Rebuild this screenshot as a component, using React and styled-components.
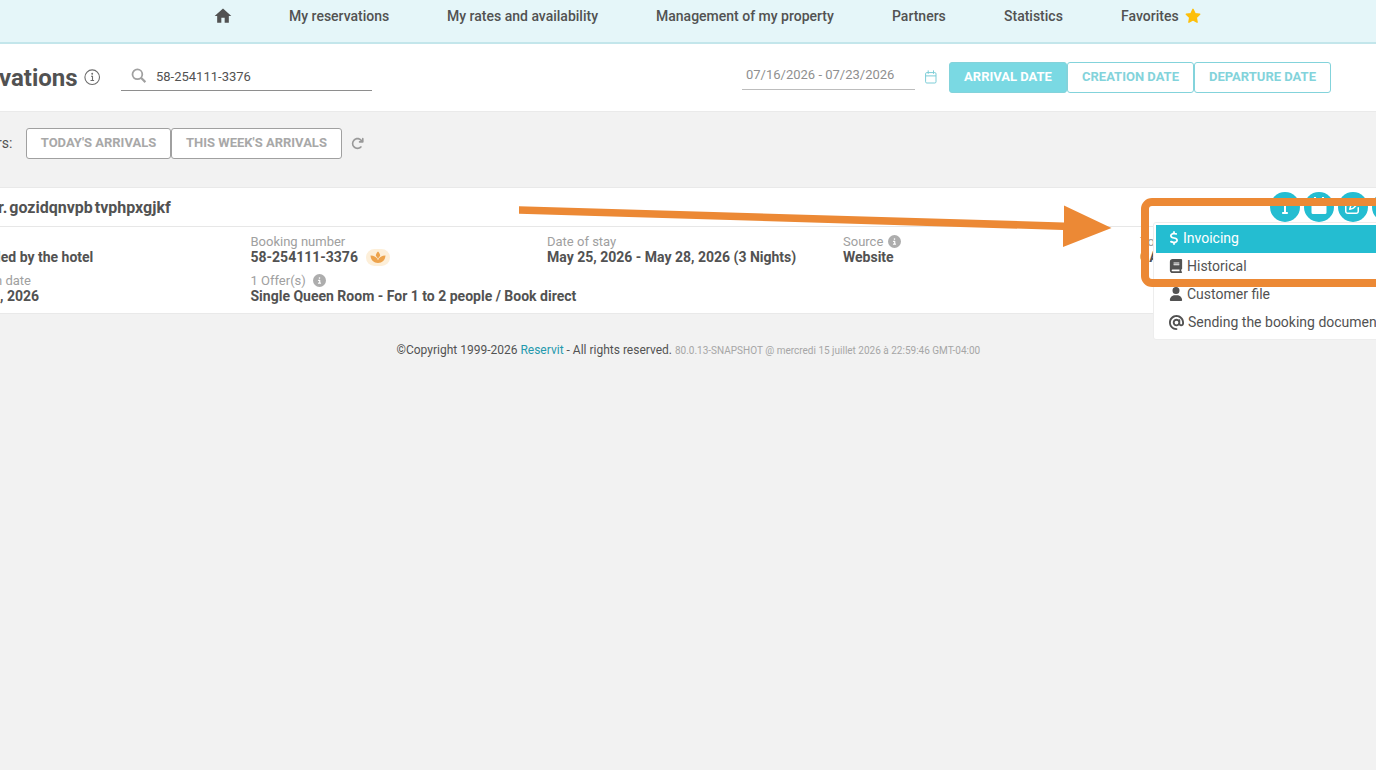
import React from 'react';
import styled, { createGlobalStyle } from 'styled-components';
import { FaArrowRotateRight, FaDollarSign, FaBook, FaUser, FaAt, FaInfo, FaCircleInfo, FaRegPenToSquare } from 'react-icons/fa6';
import { MdHome } from 'react-icons/md';

const ink = '#525252';
const teal = '#24bdd1';
const orange = '#ec8935';

const GlobalStyle = createGlobalStyle`
  * { box-sizing: border-box; }
  html, body { margin: 0; padding: 0; height: 100%; overflow: hidden; }
  body { background: #f2f2f2; color: ${ink}; font-family: Roboto, "Liberation Sans", sans-serif; }
`;

const Page = styled.div`
  position: relative;
  width: 1376px;
  height: 770px;
  overflow: hidden;
  background: #f2f2f2;
`;

const Nav = styled.nav`
  height: 44px;
  padding: 0 0 10px 213px;
  display: flex;
  align-items: center;
  background: #e5f6f9;
  border-bottom: 2px solid #c3e6eb;
`;

const NavItem = styled.a`
  flex: none;
  display: flex;
  align-items: center;
  gap: 6px;
  width: ${(p) => p.$w}px;
  white-space: nowrap;
  font-size: 14px;
  font-weight: 500;
  svg { flex: none; display: block; }
`;

const Header = styled.header`
  height: 67px;
  display: flex;
  align-items: center;
  background: #fff;
`;

const Title = styled.h1`
  margin: 0 8px 0 -1px;
  width: 77px;
  font-size: 24px;
  line-height: 28px;
  font-weight: 700;
  white-space: nowrap;
`;

const SearchField = styled.label`
  margin: 0 370px 1px 20px;
  width: 251px;
  height: 27px;
  padding: 0 0 1px 10px;
  display: flex;
  align-items: center;
  gap: 9px;
  border-bottom: 1px solid #8e8e8e;
  font-size: 13px;
  white-space: nowrap;
  svg { margin-bottom: 1px; }
`;

const DateField = styled.div`
  width: 173px;
  height: 28px;
  padding: 0 0 2px 4px;
  margin: 0 10px 4px 0;
  display: flex;
  align-items: center;
  border-bottom: 1px solid #bdbdbd;
  color: #8f8f8f;
  font-size: 13px;
  white-space: nowrap;
`;

const ButtonGroup = styled.div`
  display: flex;
  margin-left: ${(p) => p.$ml}px;
`;

const Button = styled.button`
  width: ${(p) => p.$w}px;
  height: 31px;
  padding: 0 0 2px;
  border-radius: 3px;
  border: 1px solid ${(p) => (p.$tone === 'grey' ? '#a0a0a0' : '#83d3db')};
  background: ${(p) => (p.$tone === 'active' ? '#7ad9e3' : '#fff')};
  color: ${(p) => ({ grey: '#a8a8a8', active: '#fff', teal: '#83d3db' }[p.$tone])};
  font: 700 13px Roboto, sans-serif;
  white-space: nowrap;
`;

const Filters = styled.div`
  height: 76px;
  padding-top: 16px;
  display: flex;
  align-items: flex-start;
  border-top: 1px solid #eaeaea;
  color: #999;
  svg { margin: 9px 0 0 9px; }
`;

const FilterLabel = styled.span`
  width: 15px;
  margin: 7px 0 0 -3px;
  font-size: 14px;
  line-height: 16px;
  color: ${ink};
`;

const Card = styled.section`
  height: 127px;
  background: #fff;
  border-top: 1px solid #e9e9e9;
  border-bottom: 1px solid #e9e9e9;
`;

const CardHeader = styled.div`
  height: 39px;
  display: flex;
  align-items: center;
  border-bottom: 1px solid #e7e7e7;
`;

const Guest = styled.h2`
  flex: none;
  width: 1272px;
  margin: 0 0 0 -2px;
  font-size: 16px;
  font-weight: 700;
  white-space: nowrap;
  word-spacing: -2px;
`;

const Actions = styled.div`
  display: flex;
  gap: 4px;
`;

const RoundAction = styled.span`
  flex: none;
  width: 30px;
  height: 30px;
  padding-bottom: 2px;
  border-radius: 50%;
  display: grid;
  place-items: center;
  background: ${teal};
  color: #fff;
`;

const Details = styled.div`
  padding-top: 7px;
  display: grid;
  grid-template-columns: 250.5px 296.5px 296px 297px 236px;
  grid-auto-rows: 39px;
`;

const Field = styled.div`
  grid-column: ${(p) => p.$col};
  white-space: nowrap;
`;

const FieldLabel = styled.div`
  height: 15px;
  margin-left: ${(p) => p.$shift || 0}px;
  display: flex;
  align-items: center;
  gap: ${(p) => p.$gap || 5}px;
  font-size: 13px;
  line-height: 15px;
  color: #a0a0a0;
  svg { color: #adadad; }
`;

const FieldValue = styled.div`
  height: 16px;
  margin-left: ${(p) => p.$shift || 0}px;
  display: flex;
  align-items: center;
  gap: 8px;
  font-size: 14px;
  line-height: 16px;
  font-weight: 700;
`;

const Badge = styled.span`
  width: 24px;
  height: 17px;
  border-radius: 9px;
  background: #fdefd9;
  display: grid;
  place-items: center;
`;

const Footer = styled.footer`
  padding: 28px 0 0 396.5px;
  font-size: 12px;
  line-height: 16px;
  white-space: nowrap;
`;

const Brand = styled.a`
  color: #2499ad;
`;

const Build = styled.small`
  font-size: 10px;
  color: #a6a6a6;
`;

const Menu = styled.div`
  position: absolute;
  left: 1153px;
  top: 222px;
  width: 240px;
  height: 118px;
  padding: 2px;
  background: #fff;
  border: 1px solid #ededed;
  border-radius: 3px;
`;

const MenuItem = styled.div`
  height: 28px;
  padding: 0 0 2px 13px;
  display: flex;
  align-items: center;
  gap: ${(p) => p.$gap || 4}px;
  font-size: 14px;
  white-space: nowrap;
  background: ${(p) => (p.$active ? teal : 'transparent')};
  color: ${(p) => (p.$active ? '#fff' : ink)};
`;

const DollarIcon = styled(FaDollarSign)`
  width: 10px;
  height: 14px;
`;

const Highlight = styled.div`
  position: absolute;
  left: 1141px;
  top: 198px;
  width: 260px;
  height: 89px;
  border: 8px solid ${orange};
  border-radius: 11px;
`;

const Arrow = styled.svg`
  position: absolute;
  left: 519px;
  top: 200px;
`;

const StarIcon = () => (
  <svg width="16" height="16" viewBox="0 0 16 16">
    <path d="M8 1.3l2 4.3 4.7.6-3.4 3.3.8 4.7L8 12l-4.1 2.2.8-4.7L1.3 6.2 6 5.6z" fill="#fdbf0a" stroke="#fdbf0a" strokeWidth="1.4" strokeLinejoin="round" />
  </svg>
);

const InfoOutline = () => (
  <svg width="17" height="17" viewBox="0 0 17 17" fill="none" stroke="#6c6c6c" strokeWidth="1.1">
    <circle cx="8.2" cy="8.2" r="7.3" />
    <path d="M7 7.3h1.5v4M6.5 11.5h3.6" />
    <circle cx="8.2" cy="4.8" r=".4" fill="#6c6c6c" />
  </svg>
);

const SearchIcon = () => (
  <svg width="16" height="16" viewBox="0 0 16 16" fill="none" stroke="#a0a0a0">
    <circle cx="6.4" cy="6.3" r="4.9" strokeWidth="1.8" />
    <path d="M10 9.8l4.4 4.3" strokeWidth="2.2" />
  </svg>
);

const CalendarIcon = () => (
  <svg width="12" height="16" viewBox="0 0 12 16" fill="none" stroke="#7ccdd7">
    <rect x=".6" y="2.6" width="10.4" height="10.4" rx="1.2" />
    <path d="M.6 5.9h10.4M3.2.4v3.4M8.5.4v3.4" />
  </svg>
);

const SolidCalendar = () => (
  <svg width="16" height="18" viewBox="0 0 16 18" fill="#fff">
    <path d="M.5 3h15v4.5H.5zM3 0h2v3H3zM11 0h2v3h-2zM.5 7h15v8.500a1.500 1.500 0 0 1-1.500 1.500h-12a1.500 1.500 0 0 1-1.500-1.500z" />
  </svg>
);

const LotusIcon = () => (
  <svg width="16" height="13" viewBox="0 0 16 13" fill="#eda34c">
    <path d="M8 .5c1.5 1.4 2.2 3 2.2 4.3C9.4 5.6 8.5 6.7 8 8 7.5 6.7 6.6 5.6 5.8 4.8 5.8 3.5 6.5 1.9 8 .5z" />
    <path d="M.5 4.6c3.6 0 6.2 1.5 7.5 4.7 1.3-3.2 3.9-4.7 7.5-4.7C15.1 9.5 12.2 12 8 12S.9 9.5.5 4.6z" />
  </svg>
);

export default function App() {
  return (
    <Page>
      <GlobalStyle />
      <Nav>
        <NavItem $w={76}><MdHome size={20} /></NavItem>
        <NavItem $w={158}>My reservations</NavItem>
        <NavItem $w={209}>My rates and availability</NavItem>
        <NavItem $w={236}>Management of my property</NavItem>
        <NavItem $w={112}>Partners</NavItem>
        <NavItem $w={117}>Statistics</NavItem>
        <NavItem $w={81}>Favorites <StarIcon /></NavItem>
      </Nav>

      <Header>
        <Title>vations</Title>
        <InfoOutline />
        <SearchField><SearchIcon />58-254111-3376</SearchField>
        <DateField>07/16/2026 - 07/23/2026</DateField>
        <CalendarIcon />
        <ButtonGroup $ml={12}>
          <Button $tone="active" $w={118}>ARRIVAL DATE</Button>
          <Button $tone="teal" $w={127}>CREATION DATE</Button>
          <Button $tone="teal" $w={137}>DEPARTURE DATE</Button>
        </ButtonGroup>
      </Header>

      <Filters>
        <FilterLabel>rs:</FilterLabel>
        <ButtonGroup $ml={14}>
          <Button $tone="grey" $w={145}>TODAY'S ARRIVALS</Button>
          <Button $tone="grey" $w={171}>THIS WEEK'S ARRIVALS</Button>
        </ButtonGroup>
        <FaArrowRotateRight size={13} />
      </Filters>

      <Card>
        <CardHeader>
          <Guest>r. gozidqnvpb tvphpxgjkf</Guest>
          <Actions>
            <RoundAction><FaInfo size={16} /></RoundAction>
            <RoundAction><SolidCalendar /></RoundAction>
            <RoundAction><FaRegPenToSquare size={16} /></RoundAction>
            <RoundAction />
          </Actions>
        </CardHeader>
        <Details>
          <Field $col={1}><FieldLabel /><FieldValue $shift={-3}>led by the hotel</FieldValue></Field>
          <Field $col={2}>
            <FieldLabel>Booking number</FieldLabel>
            <FieldValue>58-254111-3376 <Badge><LotusIcon /></Badge></FieldValue>
          </Field>
          <Field $col={3}>
            <FieldLabel>Date of stay</FieldLabel>
            <FieldValue>May 25, 2026 - May 28, 2026 (3 Nights)</FieldValue>
          </Field>
          <Field $col={4}>
            <FieldLabel>Source <FaCircleInfo size={13} /></FieldLabel>
            <FieldValue>Website</FieldValue>
          </Field>
          <Field $col={5}><FieldLabel>To</FieldLabel><FieldValue>CA</FieldValue></Field>
          <Field $col={1}><FieldLabel $shift={-5}>n date</FieldLabel><FieldValue>, 2026</FieldValue></Field>
          <Field $col={2}>
            <FieldLabel $gap={7}>1 Offer(s) <FaCircleInfo size={13} /></FieldLabel>
            <FieldValue>Single Queen Room - For 1 to 2 people / Book direct</FieldValue>
          </Field>
        </Details>
      </Card>

      <Footer>
        ©Copyright 1999-2026 <Brand>Reservit</Brand> - All rights reserved.{' '}
        <Build>80.0.13-SNAPSHOT @ mercredi 15 juillet 2026 à 22:59:46 GMT-04:00</Build>
      </Footer>

      <Menu>
        <MenuItem $active><DollarIcon />Invoicing</MenuItem>
        <MenuItem><FaBook size={14} />Historical</MenuItem>
        <MenuItem><FaUser size={14} />Customer file</MenuItem>
        <MenuItem><FaAt size={15} />Sending the booking documen</MenuItem>
      </Menu>
      <Highlight />
      <Arrow width="594" height="50" viewBox="0 0 594 50" fill={orange}>
        <path d="M0 6.2L545 22.5V5.5L592.5 28 544 47V30L0 13.7z" />
      </Arrow>
    </Page>
  );
}
